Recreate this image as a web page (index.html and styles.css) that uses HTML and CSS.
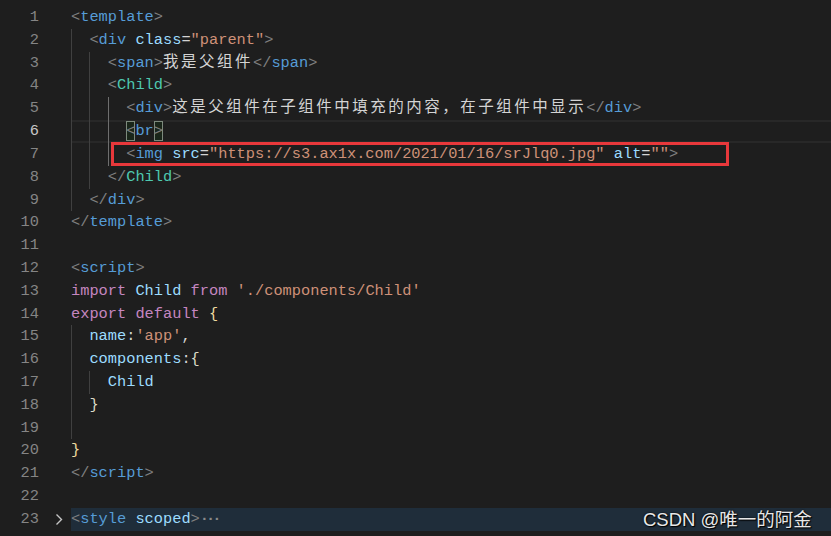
FILE: index.html
```html
<!DOCTYPE html>
<html lang="zh-CN">
<head>
<meta charset="utf-8">
<title>App.vue</title>
<link rel="stylesheet" href="styles.css">
</head>
<body>
<div class="editor">
  <div class="line"><span class="num">1</span><span class="fold"></span><span class="code"><span class="t">&lt;</span><span class="n">template</span><span class="t">&gt;</span></span></div>
  <div class="line"><span class="num">2</span><span class="fold"></span><span class="code"><i class="g"></i><span class="t">&lt;</span><span class="n">div</span> <span class="a">class</span><span class="p">=</span><span class="s">"parent"</span><span class="t">&gt;</span></span></div>
  <div class="line"><span class="num">3</span><span class="fold"></span><span class="code"><i class="g"></i><i class="g"></i><span class="t">&lt;</span><span class="n">span</span><span class="t">&gt;</span><span class="z">我是父组件</span><span class="t">&lt;/</span><span class="n">span</span><span class="t">&gt;</span></span></div>
  <div class="line"><span class="num">4</span><span class="fold"></span><span class="code"><i class="g"></i><i class="g"></i><span class="t">&lt;</span><span class="c">Child</span><span class="t">&gt;</span></span></div>
  <div class="line"><span class="num">5</span><span class="fold"></span><span class="code"><i class="g"></i><i class="g"></i><i class="g on"></i><span class="t">&lt;</span><span class="n">div</span><span class="t">&gt;</span><span class="z">这是父组件在子组件中填充的内容，在子组件中显示</span><span class="t">&lt;/</span><span class="n">div</span><span class="t">&gt;</span></span></div>
  <div class="line cur"><span class="num">6</span><span class="fold"></span><span class="code"><i class="g"></i><i class="g"></i><i class="g on"></i><span class="t m">&lt;</span><span class="n">br</span><span class="t m">&gt;</span></span></div>
  <div class="line"><span class="num">7</span><span class="fold"></span><span class="code"><i class="g"></i><i class="g"></i><i class="g on"></i><span class="t">&lt;</span><span class="n">img</span> <span class="a">src</span><span class="p">=</span><span class="s">"https://s3.ax1x.com/2021/01/16/srJlq0.jpg"</span> <span class="a">alt</span><span class="p">=</span><span class="s">""</span><span class="t">&gt;</span></span></div>
  <div class="line"><span class="num">8</span><span class="fold"></span><span class="code"><i class="g"></i><i class="g"></i><span class="t">&lt;/</span><span class="c">Child</span><span class="t">&gt;</span></span></div>
  <div class="line"><span class="num">9</span><span class="fold"></span><span class="code"><i class="g"></i><span class="t">&lt;/</span><span class="n">div</span><span class="t">&gt;</span></span></div>
  <div class="line"><span class="num">10</span><span class="fold"></span><span class="code"><span class="t">&lt;/</span><span class="n">template</span><span class="t">&gt;</span></span></div>
  <div class="line"><span class="num">11</span><span class="fold"></span><span class="code"></span></div>
  <div class="line"><span class="num">12</span><span class="fold"></span><span class="code"><span class="t">&lt;</span><span class="n">script</span><span class="t">&gt;</span></span></div>
  <div class="line"><span class="num">13</span><span class="fold"></span><span class="code"><span class="k">import</span> <span class="v">Child</span> <span class="k">from</span> <span class="s">'./components/Child'</span></span></div>
  <div class="line"><span class="num">14</span><span class="fold"></span><span class="code"><span class="k">export</span> <span class="k">default</span> <span class="b1">{</span></span></div>
  <div class="line"><span class="num">15</span><span class="fold"></span><span class="code"><i class="g"></i><span class="v">name</span><span class="p">:</span><span class="s">'app'</span><span class="p">,</span></span></div>
  <div class="line"><span class="num">16</span><span class="fold"></span><span class="code"><i class="g"></i><span class="v">components</span><span class="p">:</span><span class="b2">{</span></span></div>
  <div class="line"><span class="num">17</span><span class="fold"></span><span class="code"><i class="g"></i><i class="g"></i><span class="v">Child</span></span></div>
  <div class="line"><span class="num">18</span><span class="fold"></span><span class="code"><i class="g"></i><span class="b2">}</span></span></div>
  <div class="line"><span class="num">19</span><span class="fold"></span><span class="code"><i class="g"></i></span></div>
  <div class="line"><span class="num">20</span><span class="fold"></span><span class="code"><span class="b1">}</span></span></div>
  <div class="line"><span class="num">21</span><span class="fold"></span><span class="code"><span class="t">&lt;/</span><span class="n">script</span><span class="t">&gt;</span></span></div>
  <div class="line"><span class="num">22</span><span class="fold"></span><span class="code"></span></div>
  <div class="line folded"><span class="num">23</span><span class="fold"><svg class="chev" width="8" height="13" viewBox="0 0 8 13"><path d="M1.5 1.5 L6.5 6.5 L1.5 11.5" fill="none" stroke="#c5c5c5" stroke-width="1.4"/></svg></span><span class="code"><span class="t">&lt;</span><span class="n">style</span> <span class="a">scoped</span><span class="t">&gt;</span><span class="dots">···</span></span></div>
  <div class="mark"></div>
</div>
<div class="watermark">CSDN @唯一的阿金</div>
</body>
</html>
```

FILE: styles.css
```css
html, body {
  margin: 0;
  padding: 0;
  background: #1e1e1e;
  overflow: hidden;
  width: 831px;
  height: 536px;
}

.editor {
  position: relative;
  padding-top: 6px;
  font-family: "Liberation Mono", "DejaVu Sans Mono", monospace;
  font-size: 15.33px;
  color: #d4d4d4;
}

.line {
  display: flex;
  height: 22.82px;
  line-height: 22.82px;
  white-space: pre;
}

.num {
  width: 39px;
  flex: none;
  text-align: right;
  color: #858585;
}

.cur .num {
  color: #c6c6c6;
}

.fold {
  width: 32px;
  flex: none;
  display: flex;
  align-items: center;
}

.chev {
  margin-left: 16px;
}

.code {
  flex: 1;
  display: block;
  white-space: pre;
  height: 22.82px;
}

.cur .code {
  box-shadow: inset 0 2px 0 #282828, inset 0 -2px 0 #282828;
}

.folded .code {
  background: #1f2d3a;
}

.g {
  display: inline-block;
  vertical-align: top;
  width: 2ch;
  height: 22.82px;
  box-shadow: inset 1px 0 0 #404040;
}

.g.on {
  box-shadow: inset 1px 0 0 #6e6e6e;
}

.t { color: #808080; }
.n { color: #569cd6; }
.c { color: #4ec9b0; }
.a { color: #9cdcfe; }
.s { color: #ce9178; }
.p { color: #d4d4d4; }
.k { color: #c586c0; }
.v { color: #9cdcfe; }
.b1 { color: #f0dca0; }
.b2 { color: #dcdcc8; }

.dots {
  color: #8a8a8a;
  letter-spacing: -3px;
  font-weight: bold;
}

.m {
  display: inline-block;
  vertical-align: top;
  height: 20px;
  line-height: 21px;
  margin-top: 1px;
  box-shadow: inset 0 0 0 1px #7d8a7d;
  background: rgba(0, 100, 0, 0.12);
}

.z {
  font-family: "Noto Sans CJK SC", sans-serif;
  font-size: 15.5px;
  letter-spacing: 2.5px;
  line-height: 1;
  color: #d4d4d4;
}

.mark {
  position: absolute;
  left: 111px;
  top: 142px;
  width: 618px;
  height: 24px;
  box-sizing: border-box;
  border: 3px solid #e8383b;
}

.watermark {
  position: absolute;
  left: 643px;
  top: 505px;
  font-family: "Liberation Sans", "Noto Sans CJK SC", sans-serif;
  font-size: 18.5px;
  color: #e8e8e8;
  text-shadow: 0 0 2px #000, 1px 1px 1px #000;
  white-space: nowrap;
}
```
